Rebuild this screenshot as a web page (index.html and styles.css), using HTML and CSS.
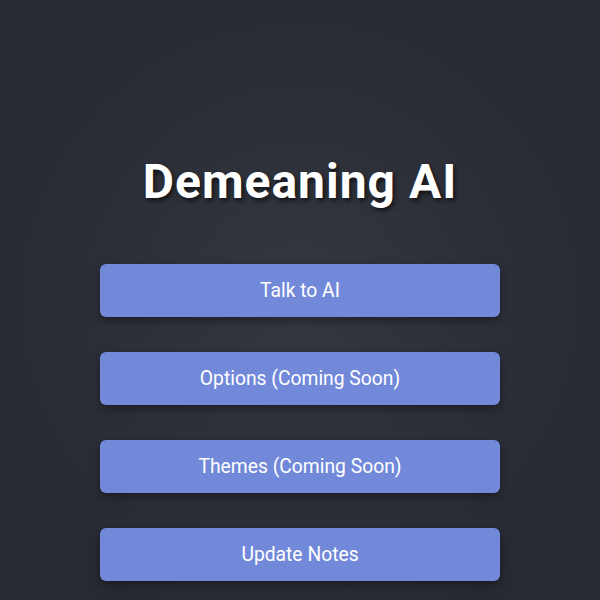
FILE: index.html
```html
<!DOCTYPE html>
<html lang="en">
<head>
<meta charset="UTF-8">
<meta name="viewport" content="width=device-width, initial-scale=1.0">
<title>Demeaning AI</title>
<link rel="stylesheet" href="styles.css">
</head>
<body>

<div class="menu">
    <h1 class="title">Demeaning AI</h1>

    <div class="buttons">
        <button class="menu-button">Talk to AI</button>
        <button class="menu-button">Options (Coming Soon)</button>
        <button class="menu-button">Themes (Coming Soon)</button>
        <button class="menu-button">Update Notes</button>
    </div>
</div>

</body>
</html>
```

FILE: styles.css
```css
html {
    background-color: #282b34;
}

body {
    font-family: Roboto, "Liberation Sans", sans-serif;
    margin: 0;
    padding: 0;
    min-height: 100vh;
    background: radial-gradient(ellipse at 50% 50%, #33373f 0%, #2c2f38 45%, #272a32 80%);
    color: #ffffff;
}

.menu {
    display: flex;
    flex-direction: column;
    align-items: center;
    padding-top: 154px;
}

.title {
    margin: 0;
    font-size: 48px;
    line-height: 56px;
    font-weight: 700;
    letter-spacing: 1px;
    text-shadow: 2px 3px 4px rgba(0, 0, 0, 0.6);
}

.buttons {
    display: flex;
    flex-direction: column;
    gap: 35px;
    margin-top: 54px;
    width: 400px;
}

.menu-button {
    height: 53px;
    border: none;
    border-radius: 6px;
    background-color: #7289d9;
    color: #ffffff;
    font-family: Roboto, "Liberation Sans", sans-serif;
    font-size: 19.3px;
    box-shadow: 0 4px 8px rgba(0, 0, 0, 0.35);
    cursor: pointer;
}

.menu-button:hover {
    background-color: #677bc4;
}
```
